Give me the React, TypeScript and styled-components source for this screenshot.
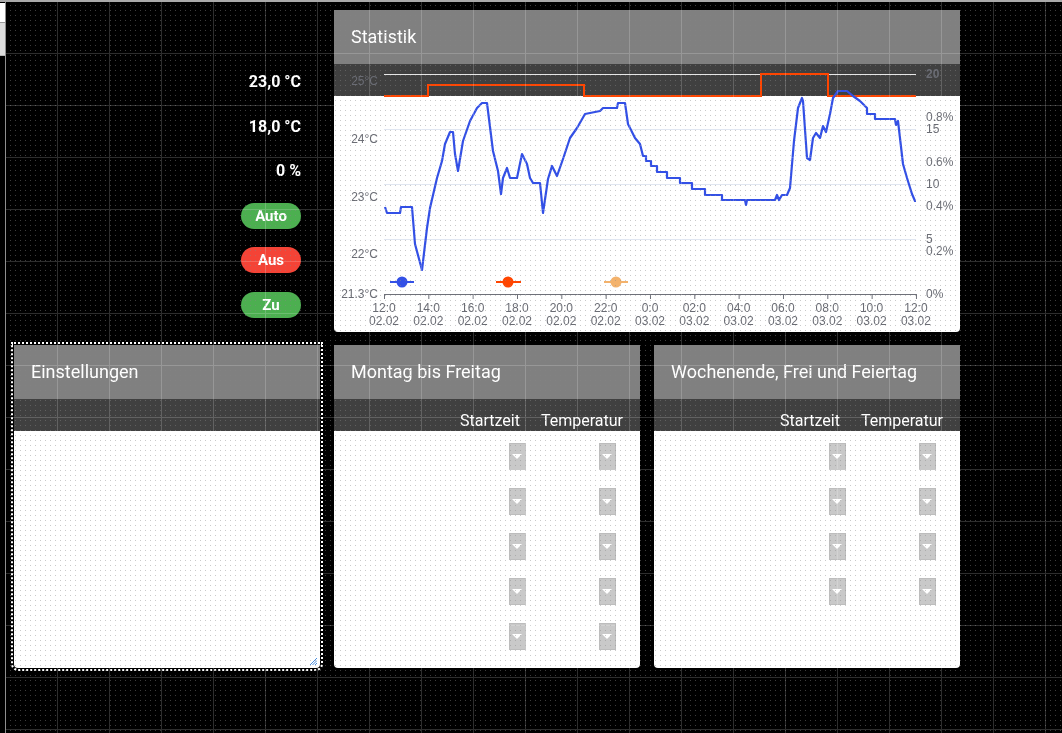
import React from 'react'
import styled, { createGlobalStyle } from 'styled-components'

const GlobalStyle = createGlobalStyle`
  html, body {
    margin: 0;
    padding: 0;
    background: #000;
  }
  body {
    font-family: Roboto, "Noto Sans", sans-serif;
    overflow: hidden;
  }
`

const Screen = styled.div`
  position: relative;
  display: flex;
  width: 1062px;
  height: 733px;
  box-sizing: border-box;
  border-top: 2px solid #a9a9a9;
  background: #000;
  overflow: hidden;
`

const Ruler = styled.div`
  flex: none;
  width: 5px;
  display: flex;
  flex-direction: column;
  padding-top: 1px;
  border-right: 1px solid #8f8f8f;
`

const RulerCap = styled.div`
  height: 19px;
  background: #fff;
  border-bottom: 1px solid #9a9a9a;
`

const RulerTrack = styled.div`
  height: 32px;
  background: #dcdcdc;
  border-bottom: 1px solid #b5b5b5;
`

const Canvas = styled.div`
  display: grid;
  grid-template-columns: repeat(3, 306px);
  grid-template-rows: 321px 323px;
  column-gap: 14px;
  row-gap: 14px;
  padding: 8px 0 0 8px;
  align-content: start;
`

// editor grid drawn over the whole canvas
const Overlay = styled.svg<{ $blend?: string }>`
  position: absolute;
  inset: 0;
  width: 100%;
  height: 100%;
  pointer-events: none;
  mix-blend-mode: ${(p) => p.$blend || 'normal'};
`

const StatusColumn = styled.div`
  display: flex;
  flex-direction: column;
  align-items: flex-end;
  padding: 49.5px 19px 0 0;
`

const StatusRow = styled.div`
  height: 44.6px;
  display: flex;
  align-items: center;
`

const Value = styled.span`
  color: #fff;
  font-weight: 700;
  font-size: 16px;
`

const Pill = styled.div<{ $tone: string }>`
  width: 60px;
  height: 26px;
  border-radius: 13px;
  background: ${(p) => p.$tone};
  color: #fff;
  font-weight: 700;
  font-size: 15px;
  display: flex;
  align-items: center;
  justify-content: center;
`

const Panel = styled.div<{ $span?: number }>`
  grid-column: span ${(p) => p.$span || 1};
  display: flex;
  flex-direction: column;
  border-radius: 0 0 4px 4px;
`

const Selected = styled(Panel)`
  outline: 2px dotted #fff;
  outline-offset: 1px;
`

const PanelHeader = styled.div`
  flex: none;
  height: 53px;
  display: flex;
  align-items: center;
  padding: 0 16px 1px 17px;
  background: #808080;
  color: #fff;
  font-size: 18px;
`

const SubBar = styled.div`
  flex: none;
  height: 32px;
  box-sizing: border-box;
  display: flex;
  justify-content: flex-end;
  align-items: flex-end;
  gap: 21px;
  padding: 0 17px 1px 0;
  background: #404040;
  color: #fff;
  font-size: 16px;
`

const Body = styled.div`
  position: relative;
  flex: 1;
  background: #fff;
  border-radius: 0 0 4px 4px;
  padding-top: 3px;
`

const ChartBody = styled.div`
  flex: 1;
  background: linear-gradient(#404040 0 32px, #fff 32px);
  border-radius: 0 0 4px 4px;

  svg {
    display: block;
  }
`

const ScheduleRow = styled.div`
  height: 45px;
  display: grid;
  grid-template-columns: 1fr 17px 73px 17px;
  align-items: center;
  padding-right: 24px;
`

const SelectStub = styled.div<{ $col: number }>`
  grid-column: ${(p) => p.$col};
  position: relative;
  width: 17px;
  height: 27px;
  box-sizing: border-box;
  background: #c9c9c9;
  border: 1px solid #bdbdbd;

  &::after {
    content: '';
    position: absolute;
    left: 2px;
    top: 10px;
    border-left: 5.5px solid transparent;
    border-right: 5.5px solid transparent;
    border-top: 5px solid #fff;
  }
`

const Grip = styled.svg`
  position: absolute;
  right: 3px;
  bottom: 3px;
`

const blue = [
  [51, 143], [53, 149], [66, 149], [67, 143], [78, 143], [81, 180], [88, 206], [93, 164],
  [96, 144], [103, 114], [108, 97], [111, 80], [116, 68], [119, 68], [121, 90], [124, 107],
  [129, 77], [136, 57], [143, 44], [148, 39], [153, 39], [159, 87], [164, 107], [167, 130],
  [169, 114], [173, 104], [176, 114], [183, 114], [188, 90], [193, 100], [196, 114], [199, 119],
  [206, 119], [209, 149], [214, 115], [218, 102], [223, 112], [229, 95], [236, 74], [243, 64],
  [251, 50], [266, 47], [269, 44], [283, 44], [284, 39], [291, 39], [294, 60], [301, 74],
  [306, 80], [309, 92], [312, 92], [312, 97], [317, 97], [317, 102], [323, 102], [323, 108],
  [333, 108], [333, 114], [346, 114], [346, 119], [358, 119], [358, 125], [371, 125], [371, 131],
  [388, 131], [388, 136], [411, 136], [412, 141], [413, 136], [441, 136], [443, 131], [445, 136],
  [448, 131], [453, 131], [456, 124], [460, 77], [464, 44], [468, 34], [469, 37], [473, 94],
  [476, 96], [479, 74], [482, 69], [486, 74], [489, 62], [492, 68], [496, 50], [499, 34],
  [504, 27], [513, 27], [519, 32], [526, 37], [533, 44], [533, 50], [541, 50], [541, 55],
  [561, 55], [562, 61], [564, 57], [569, 100], [573, 114], [578, 130], [581, 137], [582, 137],
]

const hours = ['12:0', '14:0', '16:0', '18:0', '20:0', '22:0', '0:0', '02:0', '04:0', '06:0', '08:0', '10:0', '12:0']

const axisText = { fontFamily: '"Liberation Sans", Arial, sans-serif', fontSize: 12, fill: '#6a6c74' }

const Chart = () => (
  <svg width={626} height={268} viewBox="0 0 626 268">
    <g {...axisText}>
      <text x={44} y={21} textAnchor="end">25°C</text>
      <text x={44} y={79} textAnchor="end">24°C</text>
      <text x={44} y={137} textAnchor="end">23°C</text>
      <text x={44} y={194} textAnchor="end">22°C</text>
      <text x={44} y={234} textAnchor="end">21.3°C</text>
      <text x={592} y={14} fontWeight={700}>20</text>
      <text x={592} y={57}>0.8%</text>
      <text x={592} y={69}>15</text>
      <text x={592} y={102}>0.6%</text>
      <text x={592} y={124}>10</text>
      <text x={592} y={146}>0.4%</text>
      <text x={592} y={179}>5</text>
      <text x={592} y={191}>0.2%</text>
      <text x={592} y={234}>0%</text>
      {hours.map((h, i) => (
        <g key={i}>
          <text x={50 + i * 44.33} y={248} textAnchor="middle">{h}</text>
          <text x={50 + i * 44.33} y={261} textAnchor="middle">{i < 6 ? '02.02' : '03.02'}</text>
        </g>
      ))}
    </g>
    <line x1={50} x2={582} y1={10.5} y2={10.5} stroke="#e6e6e6" />
    {[65, 120, 175].map((y) => (
      <line key={y} x1={50} x2={582} y1={y + 0.5} y2={y + 0.5} stroke="#e0e6f1" />
    ))}
    <line x1={50} x2={582} y1={230.5} y2={230.5} stroke="#6e7079" />
    {hours.map((_, i) => (
      <line key={i} x1={50.5 + i * 44.33} x2={50.5 + i * 44.33} y1={230} y2={235} stroke="#6e7079" />
    ))}
    <path d="M50 32 H94 V21 H250 V32 H427 V10 H494 V32 H582" fill="none" stroke="#ff4500" strokeWidth={2} />
    <polyline
      points={blue.map((p) => p.join(',')).join(' ')}
      fill="none"
      stroke="#3350e6"
      strokeWidth={2.2}
      strokeLinejoin="round"
    />
    <line x1={56} x2={80} y1={218} y2={218} stroke="#3350e6" strokeWidth={2} />
    <circle cx={68} cy={218} r={5.5} fill="#3350e6" />
    <line x1={162} x2={187} y1={218} y2={218} stroke="#ff4500" strokeWidth={2} />
    <circle cx={174} cy={218} r={5.5} fill="#ff4500" />
    <line x1={270} x2={294} y1={218} y2={218} stroke="#f3b26c" strokeWidth={2} />
    <circle cx={282} cy={218} r={5.5} fill="#f3b26c" />
  </svg>
)

const Schedule = ({ title, rows }: { title: string; rows: number }) => (
  <Panel>
    <PanelHeader>{title}</PanelHeader>
    <SubBar>
      <span>Startzeit</span>
      <span>Temperatur</span>
    </SubBar>
    <Body>
      {Array.from({ length: rows }).map((_, i) => (
        <ScheduleRow key={i}>
          <SelectStub $col={2} />
          <SelectStub $col={4} />
        </ScheduleRow>
      ))}
    </Body>
  </Panel>
)

export default function App() {
  return (
    <>
      <GlobalStyle />
      <Screen>
        <Ruler>
          <RulerCap />
          <RulerTrack />
        </Ruler>
        <Canvas>
          <StatusColumn>
            <StatusRow><Value>23,0 °C</Value></StatusRow>
            <StatusRow><Value>18,0 °C</Value></StatusRow>
            <StatusRow><Value>0 %</Value></StatusRow>
            <StatusRow><Pill $tone="#4caf50">Auto</Pill></StatusRow>
            <StatusRow><Pill $tone="#f44336">Aus</Pill></StatusRow>
            <StatusRow><Pill $tone="#4caf50">Zu</Pill></StatusRow>
          </StatusColumn>
          <Panel $span={2}>
            <PanelHeader>Statistik</PanelHeader>
            <ChartBody>
              <Chart />
            </ChartBody>
          </Panel>
          <Selected>
            <PanelHeader>Einstellungen</PanelHeader>
            <SubBar />
            <Body>
              <Grip width={7} height={7} viewBox="0 0 7 7">
                <path d="M7 0 L0 7 M7 2.5 L2.5 7 M7 5 L5 7" stroke="#4a8fe0" strokeWidth={1} />
              </Grip>
            </Body>
          </Selected>
          <Schedule title="Montag bis Freitag" rows={5} />
          <Schedule title="Wochenende, Frei und Feiertag" rows={4} />
        </Canvas>
        <Overlay>
          <defs>
            <pattern id="dots" width={5} height={5} patternUnits="userSpaceOnUse" x={3} y={1}>
              <rect x={2} y={2} width={1} height={1} fill="rgba(136,136,136,0.45)" />
            </pattern>
          </defs>
          <rect x={6} width="100%" height="100%" fill="url(#dots)" />
        </Overlay>
        <Overlay $blend="screen">
          <defs>
            <pattern id="lines" width={52} height={52} patternUnits="userSpaceOnUse" x={5} y={-1}>
              <path d="M0.5 0 V52 M0 0.5 H52" stroke="#2e2e2e" fill="none" />
            </pattern>
          </defs>
          <rect x={6} width="100%" height="100%" fill="url(#lines)" />
        </Overlay>
      </Screen>
    </>
  )
}
